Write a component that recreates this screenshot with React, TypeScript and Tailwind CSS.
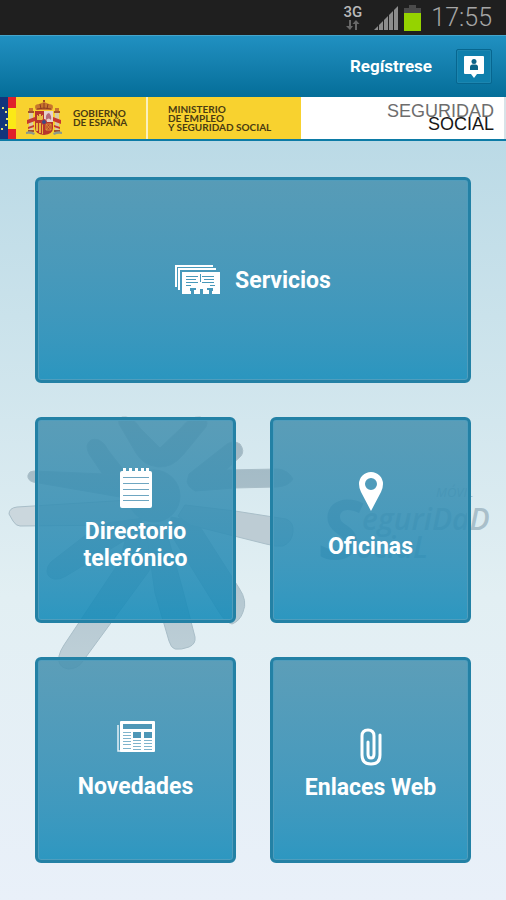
import type { ReactNode } from 'react';
import { clsx } from 'clsx';

interface TileProps {
    label: string;
    icon: ReactNode;
    className?: string;
}

function StatusBar() {
    return (
        <div className="flex h-[35px] items-center justify-end bg-[#1f1f1f] pr-3.5">
            <div className="mr-3 flex flex-col items-center">
                <span className="text-[15px] leading-[15px] font-medium text-[#b9b9b9]">3G</span>
                <svg width="14" height="10" viewBox="0 0 14 10" fill="#686868" aria-hidden="true">
                    <path d="M3 0h2v6h2L4 10 0 6h3z" />
                    <path d="M9 10h2V4h2.500L10 0 6.500 4H9z" />
                </svg>
            </div>
            <svg className="mr-1.5" width="24" height="24" viewBox="0 0 24 24" fill="#8c8c8c" aria-hidden="true">
                <path d="M0 24l4-4v4zM5 19l4-4v9H5zM10 14l4-4v14h-4zM15 9l4-4v19h-4zM20 4l4-4v24h-4z" />
            </svg>
            <svg className="mr-2.5" width="17" height="26" viewBox="0 0 17 26" aria-hidden="true">
                <path d="M5 0h7v3h5v6H0V3h5z" fill="#4b4b4b" />
                <path d="M0 8h17v18H0z" fill="#95d300" />
            </svg>
            <span className="text-[25px] leading-[35px] font-light text-[#a6a6a6]">17:55</span>
        </div>
    );
}

function TopBar() {
    return (
        <header className="flex h-[62px] items-center justify-end gap-6 border-t border-[#45a5cb] bg-linear-to-b from-[#2090c1] to-[#046e99] pr-3.5">
            <a href="#registro" className="text-[17px] font-bold text-white">Regístrese</a>
            <button
                type="button"
                aria-label="Mi cuenta"
                className="flex h-[35px] w-9 items-center justify-center rounded-xs border border-[#07668f] bg-[#0f7fac] shadow-[inset_0_0_0_1px_#1c86b0]"
            >
                <svg width="20" height="22" viewBox="0 0 20 22" aria-hidden="true">
                    <path d="M1 0h18a1 1 0 0 1 1 1v16a1 1 0 0 1-1 1h-6l-3 4-3-4H1a1 1 0 0 1-1-1V1a1 1 0 0 1 1-1z" fill="#fff" />
                    <circle cx="10" cy="5.500" r="2.500" fill="#0a6388" />
                    <path d="M6 14v-3q0-2.500 2.500-2.500h3q2.500 0 2.500 2.500v3z" fill="#0a6388" />
                </svg>
            </button>
        </header>
    );
}

function CoatOfArms() {
    return (
        <svg className="shrink-0" width="36" height="36" viewBox="0 0 36 36" aria-hidden="true">
            {/* crown */}
            <path d="M10 10Q7 4 13 4l5-2 5 2q6 0 3 6z" fill="#c8762d" />
            <path d="M11 9q7-2 14 0M14 4l1 5M22 4l-1 5M18 3v6" stroke="#8f3b22" strokeWidth="1" fill="none" />
            <path d="M17 0h2v2h-2z" fill="#a24b25" />
            {/* columns and ribbon */}
            <path d="M3 13h4v17H3zM29 13h4v17h-4z" fill="#d8cba5" />
            <path d="M2 11h6v2H2zM28 11h6v2h-6zM2 30h6v2H2zM28 30h6v2h-6z" fill="#a2522c" />
            <path d="M3 8h4v3H3zM29 8h4v3h-4z" fill="#c8762d" />
            <path d="M1 20l8-3v4l-8 3zM35 20l-8-3v4l8 3zM2 27l6-2v2l-6 2zM34 27l-6-2v2l6 2z" fill="#c6392e" />
            <path d="M0 32q4-2 9 1l-1 2q-4-2-8-1zM36 32q-4-2-9 1l1 2q4-2 8-1z" fill="#8e9a8a" />
            {/* shield */}
            <path d="M9 11h18v17q0 6-9 7-9-1-9-7z" fill="#b8362c" />
            <path d="M18 11h9v11h-9z" fill="#e6d2cc" />
            <path d="M20 20q-1-6 3-7 3 3 2 7-2-3-5 0z" fill="#b56a78" />
            <path d="M11 20v-5h1v1h1v-2h2v2h1v-1h1v5z" fill="#e9bb43" />
            <path d="M10 23h2v8h-2zM13 23h2v10h-2zM16 23h1v11h-1z" fill="#e8b33a" />
            <path d="M20 24h5v6h-5zM20 24l5 6M25 24l-5 6" stroke="#d99433" strokeWidth="1" fill="none" />
            <circle cx="18" cy="22" r="2.500" fill="#3d4c83" stroke="#c6392e" />
        </svg>
    );
}

function InstitutionBanner() {
    return (
        <div className="flex h-11 border-b-2 border-[#0c7ba6] bg-white font-['Lato',sans-serif] text-[10px] leading-[9px] font-bold text-[#493b12]">
            <svg className="shrink-0" width="16" height="42" viewBox="0 0 16 42" aria-hidden="true">
                <path d="M0 0h8v42H0z" fill="#12357c" />
                <path d="M8 0h8v42H8z" fill="#e0202b" />
                <path d="M8 11h8v21H8z" fill="#fbe916" />
                <path d="M2 10h2v2H2zM5 14h2v2H5zM6 21h2v2H6zM5 27h2v2H5zM1 31h2v2H1z" fill="#e5df79" />
            </svg>
            <div className="flex w-[285px] bg-[#f8d22f]">
                <div className="flex w-[132px] items-center gap-[11px] border-r-2 border-[#fbf0bd] pl-2.5">
                    <CoatOfArms />
                    <p>GOBIERNO<br />DE ESPAÑA</p>
                </div>
                <p className="self-center pl-5 whitespace-nowrap">
                    MINISTERIO<br />DE EMPLEO<br />Y SEGURIDAD SOCIAL
                </p>
            </div>
            <div className="ml-auto flex items-center border-r-2 border-[#d7e3e8] pr-2.5">
                <p className="text-right font-['Liberation_Sans',sans-serif] text-lg leading-[13px] font-normal text-[#6d6d6d]">
                    SEGURIDAD<br /><span className="text-[#161616]">SOCIAL</span>
                </p>
            </div>
        </div>
    );
}

function Watermark() {
    return (
        <svg className="absolute inset-x-0 top-0 w-full" viewBox="0 141 506 759" aria-hidden="true">
            <defs>
                <linearGradient id="ray" x1="0" y1="400" x2="0" y2="670" gradientUnits="userSpaceOnUse">
                    <stop offset="0" stopColor="#9bb4c0" />
                    <stop offset="1" stopColor="#bfd0d8" />
                </linearGradient>
            </defs>
            <g fill="url(#ray)" stroke="#a9bec8" strokeWidth="1" strokeLinejoin="round">
                <path d="M119 424q-2-8 7-7 8 1 14 11l20 20 21-20q9-12 19-11 10 2 6 10l-23 28q-11 13-25 12-15-2-22-14z" />
                <path d="M87 446q2-9 12-6 6 3 9 10l28 36-24 2-23-34q-2-4-2-8z" />
                <path d="M34 471l94 4 22 8v13l-30 1-87-15q-6-2-5-7 1-4 6-4z" />
                <path d="M17 507l113-7 20 5v14l-28 6-102 1q-4 0-7-5l-4-7q0-6 8-7z" fill="#cbd7dd" />
                <path d="M47 571q0-5 4-9l49-38 44-6-12 18-66 40q-6 4-12 3-7-2-7-8z" />
                <path d="M129 525h30l-10 46-66 90q-5 8-15 8-11-2-9-13 1-5 5-11l56-84z" />
                <path d="M146 530h20l16 57 13 50q1 7-6 10-8 3-14 2-4-1-6-8l-14-48z" />
                <path d="M171 517l26 5 42 66q9 13 4 24-3 9-11 12-7-2-13-12l-49-79z" />
                <path d="M185 505l50 6 51 8q8 3 7 13-1 10-10 14-7 1-17-2l-76-19-12-9z" fill="#bdccd4" />
                <path d="M189 474l38-30q7-4 13 0 5 7 1 12l-15 14 52-1q10 1 15 10-4 7-16 8l-43 1-39 3q-7-4-8-9z" />
                <circle cx="154" cy="496" r="26" />
            </g>
            <g fill="#a9bfca" fontFamily="Open Sans, sans-serif" fontStyle="italic" fontWeight="bold">
                <text x="436" y="497" fontSize="13" fontWeight="400">MÓVIL</text>
                <text x="319" y="559" fontSize="82" fill="#91b0c3">S</text>
                <text x="362" y="530" fontSize="30" fontWeight="600">eguriDaD</text>
                <text x="356" y="558" fontSize="30" fontWeight="600">ociaL</text>
            </g>
        </svg>
    );
}

function ServicesIcon() {
    return (
        <svg width="46" height="32" viewBox="0 0 46 32" aria-hidden="true">
            <path d="M1 23V2h37M4 26V5h37" fill="none" stroke="#fff" strokeWidth="2" />
            <path d="M7 8h38v22H7z" fill="#fff" />
            <path d="M11 12h12v1H11zM27 12h12v1H27zM11 15h10v1H11zM29 15h10v1H29zM11 18h12v1H11zM27 18h12v1H27zM11 21h5v1h-5zM35 21h5v1h-5z" fill="#4798ba" />
            <path d="M15 24h6v2h-2v4h-3v-3h-1zM25 25h3v5h-3zM32 24h6v3h-1v3h-3v-4h-2zM25 10h1v8h-1z" fill="#4798ba" />
        </svg>
    );
}

function NotepadIcon() {
    return (
        <svg className="mb-2.5" width="32" height="40" viewBox="0 0 32 40" aria-hidden="true">
            <path d="M2 3h1V0h3v3h3V0h3v3h3V0h3v3h3V0h3v3h2V0h3v3h1q2 0 2 2v33q0 2-2 2H2q-2 0-2-2V5q0-2 2-2z" fill="#fff" />
            <path d="M3 9.500h26M3 15.500h26M3 21.500h26M3 27.500h26M3 32.500h26" stroke="#6ea6c1" strokeWidth="1" />
        </svg>
    );
}

function PinIcon() {
    return (
        <svg className="mb-[22px]" width="26" height="39" viewBox="0 0 26 39" aria-hidden="true">
            <path fillRule="evenodd" d="M13 0a12 12 0 0 1 12 12q0 4-2 8L13 39 3 20q-2-4-2-8A12 12 0 0 1 13 0zm0 6a6 6 0 1 0 0 12 6 6 0 0 0 0-12z" fill="#fff" />
        </svg>
    );
}

function NewspaperIcon() {
    return (
        <svg className="mb-[21px]" width="38" height="31" viewBox="0 0 38 31" aria-hidden="true">
            <path d="M1 4v26h3" fill="none" stroke="#e4f1f7" strokeWidth="1.500" />
            <rect x="3" y="0" width="35" height="31" rx="1" fill="#fff" />
            <path d="M6 3h29v5H6zM16 11h8v6h-8zM27 11h8v6h-8z" fill="#4e97b7" />
            <path d="M6 11.500h8M6 14.500h8M6 17.500h8M6 20.500h8M6 23.500h8M6 27.500h8M16 19.500h8M16 22.500h8M16 25.500h8M16 28.500h8M27 19.500h8M27 22.500h8M27 25.500h8M27 28.500h8" stroke="#7fb4cc" strokeWidth="1" />
        </svg>
    );
}

function PaperclipIcon() {
    return (
        <svg className="mb-2" width="22" height="38" viewBox="0 0 22 38" fill="none" stroke="#fff" strokeWidth="3" strokeLinecap="round" aria-hidden="true">
            <path d="M8 14v12q0 4 3 4t3-4V8q0-6-6-6T2 8v19q0 9 9 9t9-9V7" />
        </svg>
    );
}

function Tile({ label, icon, className }: TileProps) {
    return (
        <button
            type="button"
            className={clsx(
                'flex h-[206px] items-center justify-center rounded-md border-[3px] border-[#2381a5] bg-linear-to-b from-[#4a93b0]/88 to-[#118bb9]/88 bg-origin-border text-[23px] leading-[27px] font-bold text-white shadow-[inset_0_0_0_1px_#4f9dbd]',
                className
            )}
        >
            {icon}
            <span>{label}</span>
        </button>
    );
}

export default function App() {
    return (
        <div className="flex min-h-screen flex-col font-['Roboto',sans-serif]">
            <StatusBar />
            <TopBar />
            <InstitutionBanner />
            <main className="relative flex-1 bg-linear-to-b from-[#bbdae6] via-[#e2eff3] via-60% to-[#e9f0f9] px-[35px] pt-9 pb-9">
                <Watermark />
                <nav className="relative grid grid-cols-2 gap-[34px]">
                    <Tile label="Servicios" icon={<ServicesIcon />} className="col-span-2 gap-3.5" />
                    <Tile label="Directorio telefónico" icon={<NotepadIcon />} className="flex-col px-8" />
                    <Tile label="Oficinas" icon={<PinIcon />} className="flex-col pb-2" />
                    <Tile label="Novedades" icon={<NewspaperIcon />} className="flex-col" />
                    <Tile label="Enlaces Web" icon={<PaperclipIcon />} className="flex-col pt-2" />
                </nav>
            </main>
        </div>
    );
}
